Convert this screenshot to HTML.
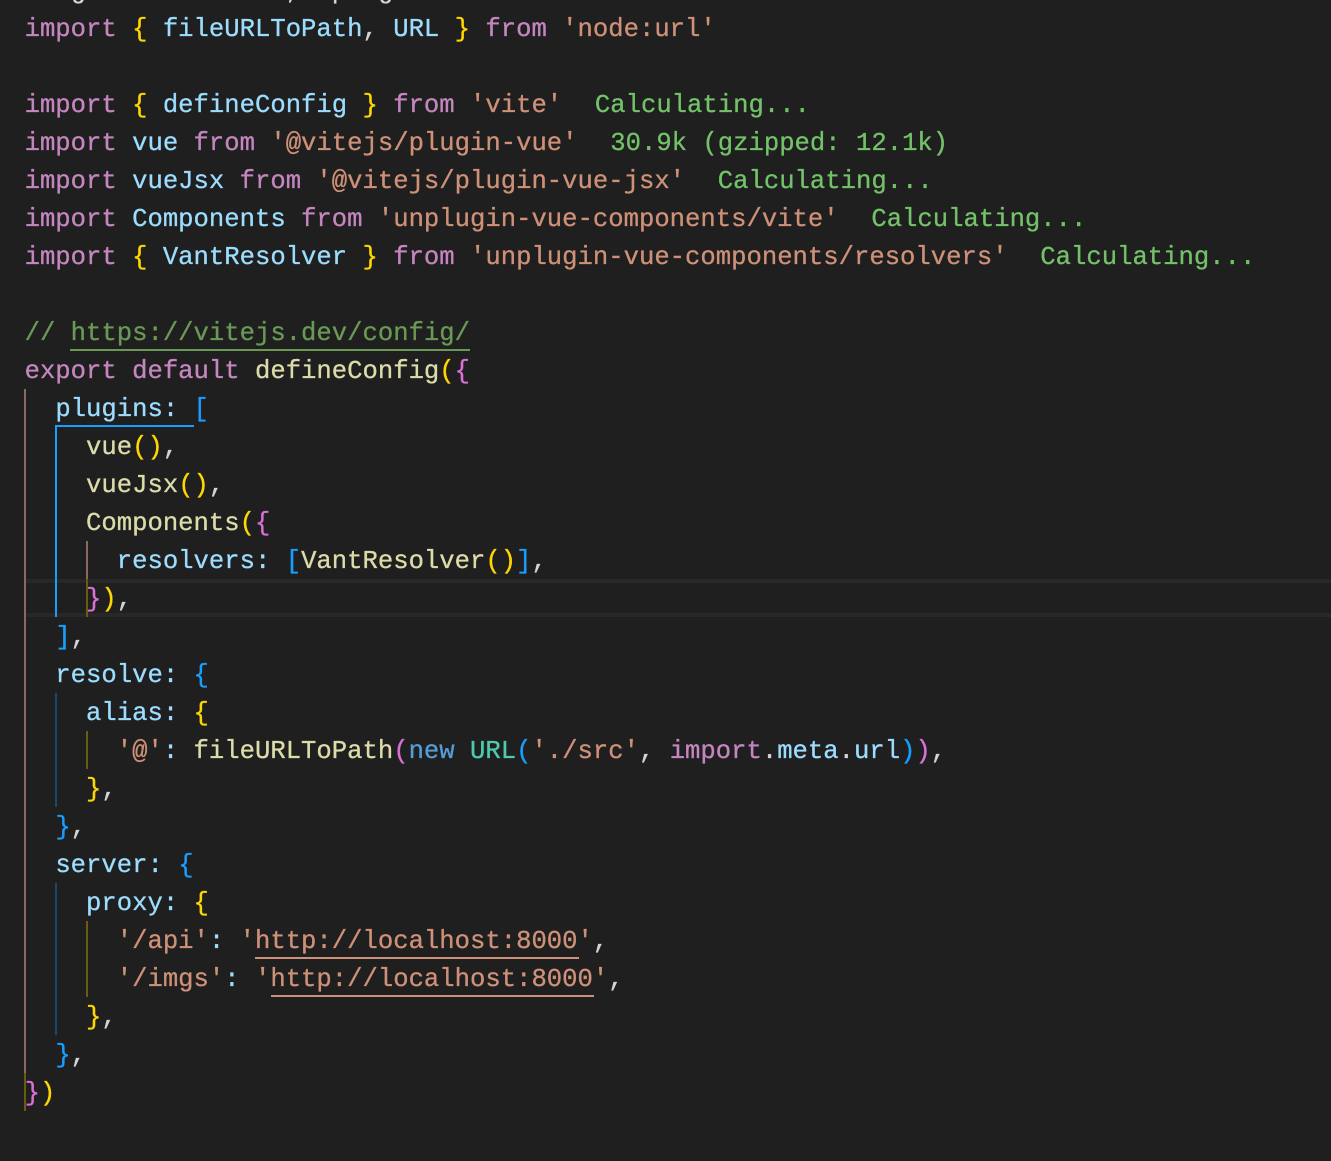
<!DOCTYPE html>
<html>
<head>
<meta charset="utf-8">
<style>
html,body{margin:0;padding:0;background:#1f1f1f;}
#s{position:relative;width:1331px;height:1161px;overflow:hidden;background:#1f1f1f;}
.l{position:absolute;left:24.6px;height:38px;line-height:38px;white-space:pre;font-family:"Liberation Mono",monospace;font-size:25.6px;color:#d4d4d4;-webkit-text-stroke:0.3px currentColor;}
.k{color:#c586c0}.v{color:#9cdcfe}.f{color:#dcdcaa}.s{color:#ce9178}.c{color:#6a9955}.g{color:#ffd700}.m{color:#da70d6}.b{color:#179fff}.i{color:#73c269;margin-left:2px}.n{color:#569cd6}.e{color:#4ec9b0}
.r{position:absolute}
</style>
</head>
<body>
<div id="s">
<div class="r" style="left:25px;top:579px;width:1306px;height:4px;background:#282828"></div>
<div class="r" style="left:25px;top:613px;width:1306px;height:4px;background:#282828"></div>

<div class="r" style="left:24px;top:389px;width:2px;height:684px;background:#8a6a5c"></div>
<div class="r" style="left:24px;top:1073px;width:2px;height:38px;background:#6b5a12"></div>
<div class="r" style="left:55px;top:427px;width:2px;height:190px;background:#179fff"></div>
<div class="r" style="left:55px;top:425px;width:139px;height:2px;background:#179fff"></div>
<div class="r" style="left:55px;top:693px;width:2px;height:114px;background:#1a4a6b"></div>
<div class="r" style="left:55px;top:883px;width:2px;height:152px;background:#1a4a6b"></div>
<div class="r" style="left:86px;top:541px;width:2px;height:38px;background:#8a6a5c"></div>
<div class="r" style="left:86px;top:579px;width:2px;height:38px;background:#6b5a12"></div>
<div class="r" style="left:86px;top:731px;width:2px;height:38px;background:#6b5a12"></div>
<div class="r" style="left:86px;top:921px;width:2px;height:76px;background:#6b5a12"></div>

<div class="r" style="left:70px;top:349px;width:400px;height:2px;background:#6a9955"></div>
<div class="r" style="left:255px;top:957px;width:324px;height:2px;background:#ce9178"></div>
<div class="r" style="left:271px;top:995px;width:323px;height:2px;background:#ce9178"></div>

<div class="l" style="top:-27px">   g             ,  p  g</div>
<div class="l" style="top:11px"><span class="k">import</span> <span class="g">{</span> <span class="v">fileURLToPath</span>, <span class="v">URL</span> <span class="g">}</span> <span class="k">from</span> <span class="s">'node:url'</span></div>
<div class="l" style="top:87px"><span class="k">import</span> <span class="g">{</span> <span class="v">defineConfig</span> <span class="g">}</span> <span class="k">from</span> <span class="s">'vite'</span>  <span class="i">Calculating...</span></div>
<div class="l" style="top:125px"><span class="k">import</span> <span class="v">vue</span> <span class="k">from</span> <span class="s">'@vitejs/plugin-vue'</span>  <span class="i">30.9k (gzipped: 12.1k)</span></div>
<div class="l" style="top:163px"><span class="k">import</span> <span class="v">vueJsx</span> <span class="k">from</span> <span class="s">'@vitejs/plugin-vue-jsx'</span>  <span class="i">Calculating...</span></div>
<div class="l" style="top:201px"><span class="k">import</span> <span class="v">Components</span> <span class="k">from</span> <span class="s">'unplugin-vue-components/vite'</span>  <span class="i">Calculating...</span></div>
<div class="l" style="top:239px"><span class="k">import</span> <span class="g">{</span> <span class="v">VantResolver</span> <span class="g">}</span> <span class="k">from</span> <span class="s">'unplugin-vue-components/resolvers'</span>  <span class="i">Calculating...</span></div>
<div class="l" style="top:315px"><span class="c">// https://vitejs.dev/config/</span></div>
<div class="l" style="top:353px"><span class="k">export</span> <span class="k">default</span> <span class="f">defineConfig</span><span class="g">(</span><span class="m">{</span></div>
<div class="l" style="top:391px">  <span class="v">plugins</span><span class="v">:</span> <span class="b">[</span></div>
<div class="l" style="top:429px">    <span class="f">vue</span><span class="g">()</span>,</div>
<div class="l" style="top:467px">    <span class="f">vueJsx</span><span class="g">()</span>,</div>
<div class="l" style="top:505px">    <span class="f">Components</span><span class="g">(</span><span class="m">{</span></div>
<div class="l" style="top:543px">      <span class="v">resolvers</span><span class="v">:</span> <span class="b">[</span><span class="f">VantResolver</span><span class="g">()</span><span class="b">]</span>,</div>
<div class="l" style="top:581px">    <span class="m">}</span><span class="g">)</span>,</div>
<div class="l" style="top:619px">  <span class="b">]</span>,</div>
<div class="l" style="top:657px">  <span class="v">resolve</span><span class="v">:</span> <span class="b">{</span></div>
<div class="l" style="top:695px">    <span class="v">alias</span><span class="v">:</span> <span class="g">{</span></div>
<div class="l" style="top:733px">      <span class="s">'@'</span><span class="v">:</span> <span class="f">fileURLToPath</span><span class="m">(</span><span class="n">new</span> <span class="e">URL</span><span class="b">(</span><span class="s">'./src'</span>, <span class="k">import</span>.<span class="v">meta</span>.<span class="v">url</span><span class="b">)</span><span class="m">)</span>,</div>
<div class="l" style="top:771px">    <span class="g">}</span>,</div>
<div class="l" style="top:809px">  <span class="b">}</span>,</div>
<div class="l" style="top:847px">  <span class="v">server</span><span class="v">:</span> <span class="b">{</span></div>
<div class="l" style="top:885px">    <span class="v">proxy</span><span class="v">:</span> <span class="g">{</span></div>
<div class="l" style="top:923px">      <span class="s">'/api'</span><span class="v">:</span> <span class="s">'http://localhost:8000'</span>,</div>
<div class="l" style="top:961px">      <span class="s">'/imgs'</span><span class="v">:</span> <span class="s">'http://localhost:8000'</span>,</div>
<div class="l" style="top:999px">    <span class="g">}</span>,</div>
<div class="l" style="top:1037px">  <span class="b">}</span>,</div>
<div class="l" style="top:1075px"><span class="m">}</span><span class="g">)</span></div>
</div>
</body>
</html>
